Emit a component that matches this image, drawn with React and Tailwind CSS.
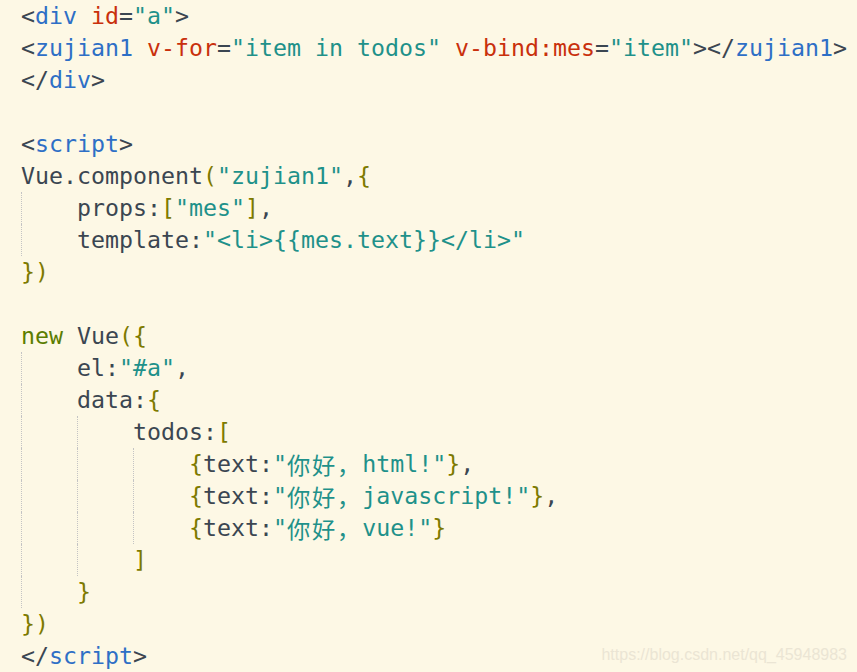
import React from "react";

// token colours
const C = {
  p: "text-[#3b4651]",
  t: "text-[#2e6fc6]",
  a: "text-[#c9300c]",
  s: "text-[#1f918a]",
  b: "text-[#7d7a00]",
  k: "text-[#5b7d00]",
};

const lines = [
  { i: 0, t: [["<", "p"], ["div", "t"], [" "], ["id", "a"], ["=", "p"], ['"a"', "s"], [">", "p"]] },
  {
    i: 0,
    t: [
      ["<", "p"], ["zujian1", "t"], [" "], ["v-for", "a"], ["=", "p"], ['"item in todos"', "s"], [" "],
      ["v-bind:mes", "a"], ["=", "p"], ['"item"', "s"], ["></", "p"], ["zujian1", "t"], [">", "p"],
    ],
  },
  { i: 0, t: [["</", "p"], ["div", "t"], [">", "p"]] },
  { i: 0, t: [] },
  { i: 0, t: [["<", "p"], ["script", "t"], [">", "p"]] },
  { i: 0, t: [["Vue.component", "p"], ["(", "b"], ['"zujian1"', "s"], [",", "p"], ["{", "b"]] },
  { i: 1, t: [["props:", "p"], ["[", "b"], ['"mes"', "s"], ["]", "b"], [",", "p"]] },
  { i: 1, t: [["template:", "p"], ['"<li>{{mes.text}}</li>"', "s"]] },
  { i: 0, t: [["})", "b"]] },
  { i: 0, t: [] },
  { i: 0, t: [["new", "k"], [" Vue", "p"], ["({", "b"]] },
  { i: 1, t: [["el:", "p"], ['"#a"', "s"], [",", "p"]] },
  { i: 1, t: [["data:", "p"], ["{", "b"]] },
  { i: 2, t: [["todos:", "p"], ["[", "b"]] },
  { i: 3, t: [["{", "b"], ["text:", "p"], ['"', "s"], ["你好，", "cjk"], ['html!"', "s"], ["}", "b"], [",", "p"]] },
  { i: 3, t: [["{", "b"], ["text:", "p"], ['"', "s"], ["你好，", "cjk"], ['javascript!"', "s"], ["}", "b"], [",", "p"]] },
  { i: 3, t: [["{", "b"], ["text:", "p"], ['"', "s"], ["你好，", "cjk"], ['vue!"', "s"], ["}", "b"]] },
  { i: 2, t: [["]", "b"]] },
  { i: 1, t: [["}", "b"]] },
  { i: 0, t: [["})", "b"]] },
  { i: 0, t: [["</", "p"], ["script", "t"], [">", "p"]] },
];

const Token = ({ text, kind }) => {
  if (kind === "cjk") {
    return (
      <span className="text-[#1f918a] tracking-[1.8px] font-['Noto_Sans_CJK_SC',sans-serif]">{text}</span>
    );
  }
  return <span className={kind ? C[kind] : ""}>{text}</span>;
};

export default function App() {
  return (
    <div className="relative h-[672px] w-full overflow-hidden bg-[#fdf8e5]">
      <div className="pl-[21px] font-['DejaVu_Sans_Mono',monospace] text-[23.25px] text-[#3b4651]">
        {lines.map((line, n) => (
          <div key={n} className="flex h-[32px] items-center whitespace-pre leading-[32px]">
            {Array.from({ length: line.i }).map((_, k) => (
              <span key={k} className="h-[32px] w-[56px] shrink-0 border-l border-dotted border-[#c4c4c4]" />
            ))}
            {line.t.map(([text, kind], k) => (
              <Token key={k} text={text} kind={kind} />
            ))}
          </div>
        ))}
      </div>
      <div className="absolute bottom-[5px] right-[10px] font-['Liberation_Sans',sans-serif] text-[16px] text-[#ebe5d4]">
        https://blog.csdn.net/qq_45948983
      </div>
    </div>
  );
}
